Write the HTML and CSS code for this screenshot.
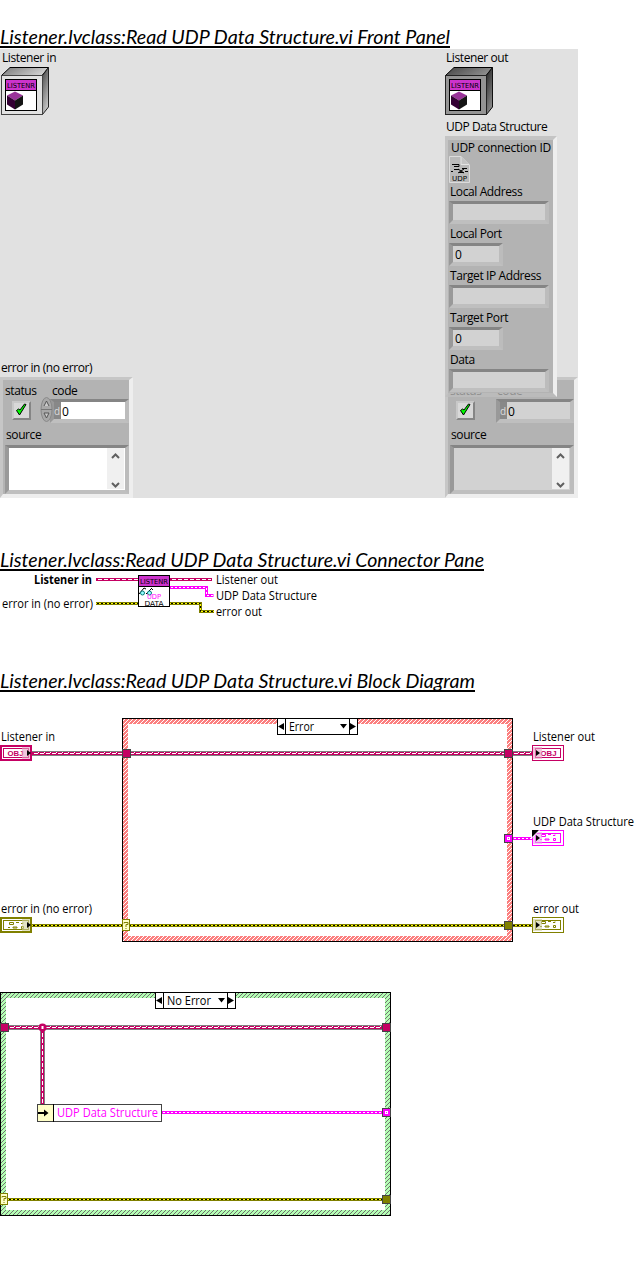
FILE: index.html
```html
<!DOCTYPE html>
<html lang="en">
<head>
<meta charset="utf-8">
<title>Listener.lvclass:Read UDP Data Structure.vi</title>
<link rel="stylesheet" href="styles.css">
</head>
<body>
<svg class="defs" width="0" height="0" aria-hidden="true">
  <defs>
    <pattern id="hatch-red" width="4" height="4" patternUnits="userSpaceOnUse">
      <rect width="4" height="4" fill="#fb7f7f"/>
      <path d="M3 0h1v1h-1zM2 1h1v1h-1zM1 2h1v1h-1zM0 3h1v1h-1z" fill="#fff"/>
    </pattern>
    <pattern id="hatch-green" width="4" height="4" patternUnits="userSpaceOnUse">
      <rect width="4" height="4" fill="#b4ffb4"/>
      <path d="M3 0h1v1h-1zM2 1h1v1h-1zM1 2h1v1h-1zM0 3h1v1h-1z" fill="#707070"/>
    </pattern>
    <linearGradient id="lit-top" x1="0" x2="1" y1="0" y2="0.3"><stop offset="0" stop-color="#777"/><stop offset="1" stop-color="#d0d0d0"/></linearGradient>
    <linearGradient id="lit-side" x1="0" x2="0.4" y1="0" y2="1"><stop offset="0" stop-color="#444"/><stop offset="1" stop-color="#c4c4c4"/></linearGradient>
    <linearGradient id="dim-top" x1="0" x2="1" y1="0" y2="0.3"><stop offset="0" stop-color="#444"/><stop offset="1" stop-color="#8c8c8c"/></linearGradient>
    <linearGradient id="dim-side" x1="0" x2="0.4" y1="0" y2="1"><stop offset="0" stop-color="#222"/><stop offset="1" stop-color="#888"/></linearGradient>
    <g id="badge">
      <rect x=".5" y=".5" width="31" height="31" fill="#fff" stroke="#000"/>
      <rect x="1" y="1" width="30" height="10" fill="#cc33cc"/>
      <path d="M0 11.500h32" stroke="#000"/>
      <text class="pixel" x="2" y="8.500" textLength="28" lengthAdjust="spacingAndGlyphs">LISTENR</text>
    </g>
    <g id="cube">
      <path d="M10 12.500l8 4-8 5-8-5z" fill="#993399"/>
      <path d="M2 16.500l8 5v9l-8-5z" fill="#330033"/>
      <path d="M18 16.500l-8 5v9l8-5z" fill="#141414"/>
    </g>
    <g id="cluster-glyph" fill="none" stroke="currentColor">
      <path d="M8.500 4.500h4v2h-4zM15 4.500h3M20 5.500h2v-1M7 9.500h2M12 9h4v1h-4zM20.500 8.500h2v2h-2z"/>
    </g>
  </defs>
</svg>

<h2 class="title title-first"><svg width="460" height="49"><text x="0" y="44" textLength="450" lengthAdjust="spacingAndGlyphs">Listener.lvclass:Read UDP Data Structure.vi Front Panel</text><rect y="46" width="450" height="2"/></svg></h2>

<section class="panel">
  <div class="column column-in">
    <span class="label">Listener in</span>
    <svg class="object" width="48" height="48">
      <path d="M.5 8.500L9 .5h38.500L41 8.500z" fill="url(#lit-top)" stroke="#000"/>
      <path d="M41.500 8.500l6-8v39.500l-6 7.500z" fill="url(#lit-side)" stroke="#222"/>
      <rect x=".5" y="8.500" width="41" height="39" fill="#e2e2e2" stroke="#444"/>
      <use href="#badge" x="4" y="12"/><use href="#cube" x="4" y="12"/>
    </svg>
    <span class="label label-error">error in (no error)</span>
    <div class="cluster">
      <div class="row">
        <div class="status"><span class="label">status</span>
          <div class="check"><svg width="13" height="15"><path d="M1.500 8.500l3 4.500L11 2.500l-1.500-.5L5 8 3.500 7z" fill="#0f0" stroke="#000"/></svg></div></div>
        <div class="code"><span class="label">code</span>
          <div class="number"><svg class="spinner" width="13" height="25"><ellipse cx="6.500" cy="12.500" rx="5.500" ry="12" fill="#a8a8a8" stroke="#888"/><path d="M1 12.500h11" stroke="#777"/><path d="M4 9l2.500-5L9 9M4 16h5l-2.500 5z" fill="#ccc" stroke="#555"/></svg><div class="field field-code"><b>d</b><span>0</span></div></div></div>
      </div>
      <span class="label label-source">source</span>
      <div class="field field-source"><div class="scroll"><svg width="9" height="6"><path d="M1 5l3.500-3.500L8 5"/></svg><svg width="9" height="6"><path d="M1 1l3.500 3.500L8 1"/></svg></div></div>
    </div>
  </div>

  <div class="column column-out">
    <span class="label">Listener out</span>
    <svg class="object" width="48" height="48">
      <path d="M.5 8.500L9 .5h38.500L41 8.500z" fill="url(#dim-top)" stroke="#000"/>
      <path d="M41.500 8.500l6-8v39.500l-6 7.500z" fill="url(#dim-side)" stroke="#111"/>
      <rect x=".5" y="8.500" width="41" height="39" fill="#949494" stroke="#222"/>
      <use href="#badge" x="4" y="12"/><use href="#cube" x="4" y="12"/>
    </svg>
    <span class="label label-error">e</span>
    <div class="cluster readonly">
      <div class="row">
        <div class="status"><span class="label">status</span>
          <div class="check"><svg width="13" height="15"><path d="M1.500 8.500l3 4.500L11 2.500l-1.500-.5L5 8 3.500 7z" fill="#0f0" stroke="#000"/></svg></div></div>
        <div class="code"><span class="label">code</span>
          <div class="number"><div class="field field-code"><b>d</b><span>0</span></div></div></div>
      </div>
      <span class="label label-source">source</span>
      <div class="field field-source"><div class="scroll"><svg width="9" height="6"><path d="M1 5l3.500-3.500L8 5"/></svg><svg width="9" height="6"><path d="M1 1l3.500 3.500L8 1"/></svg></div></div>
    </div>
    <div class="overlay">
      <span class="label">UDP Data Structure</span>
      <div class="udp">
        <span class="label label-id">UDP connection ID</span>
        <svg class="refnum" width="21" height="27"><path d="M.5.5H12l8.500 8.500v17.500H.5z" fill="#bababa" stroke="#dcdcdc"/><path d="M12 .5v8h8" fill="#c4c4c4" stroke="#e4e4e4"/><path d="M3 8.500h7v2H5M5 13.500h5M13 12.500h5M10 16.500h5M2 15.500h2M16 15.500h3M9 13l6 4M15 13l-6 4" fill="none" stroke="#000"/><text class="pixel" x="3" y="25" textLength="15" lengthAdjust="spacingAndGlyphs">UDP</text></svg>
        <span class="label">Local Address</span><div class="field field-wide"></div>
        <span class="label">Local Port</span><div class="field field-port">0</div>
        <span class="label">Target IP Address</span><div class="field field-wide"></div>
        <span class="label">Target Port</span><div class="field field-port">0</div>
        <span class="label">Data</span><div class="field field-wide"></div>
      </div>
    </div>
  </div>
</section>

<h2 class="title title-next"><svg width="500" height="74"><text x="0" y="69" textLength="484" lengthAdjust="spacingAndGlyphs">Listener.lvclass:Read UDP Data Structure.vi Connector Pane</text><rect y="71" width="484" height="2"/></svg></h2>

<!-- Connector pane -->
<svg class="canvas" width="636" height="50" viewBox="0 572 636 50">
  <g fill="none">
    <path class="w-obj" d="M96 579.500h42M170 579.500h42"/><path class="dash" d="M98 579.500h40M172 579.500h39"/>
    <path class="w-udp" d="M170 587.500h36.500v8h7"/><path class="dash-s" d="M171 587.500h35.500v8h7"/>
    <path class="w-err" d="M96 603.500h42M170 603.500h30.500v8h13.500"/><path class="w-yel" d="M96 603.500h42M170 603.500h30.500v8h13.500"/><path class="dash-k" d="M97 603.500h41M171 603.500h29.500v8h13.500"/>
  </g>
  <use href="#badge" x="138" y="575"/>
  <path d="M139 594l5-6M146 594l6-6" stroke="#000" fill="none"/><path d="M144 588l2 1M151 588l2 2" stroke="#000"/>
  <circle cx="142.500" cy="593" r="2" fill="#9ff" stroke="#087b7b"/><circle cx="149.500" cy="593" r="2" fill="#9ff" stroke="#087b7b"/>
  <text class="pixel mag" x="147" y="599" textLength="14" lengthAdjust="spacingAndGlyphs">UDP</text>
  <text class="pixel" x="144.500" y="605.500" textLength="19" lengthAdjust="spacingAndGlyphs">DATA</text>
  <text class="bold" x="34" y="584" textLength="58" lengthAdjust="spacingAndGlyphs">Listener in</text>
  <text x="2" y="608" textLength="91" lengthAdjust="spacingAndGlyphs">error in (no error)</text>
  <text x="216" y="584" textLength="62" lengthAdjust="spacingAndGlyphs">Listener out</text>
  <text x="216" y="600" textLength="101" lengthAdjust="spacingAndGlyphs">UDP Data Structure</text>
  <text x="216" y="616" textLength="46" lengthAdjust="spacingAndGlyphs">error out</text>
</svg>

<h2 class="title title-last"><svg width="500" height="70"><text x="0" y="66" textLength="475" lengthAdjust="spacingAndGlyphs">Listener.lvclass:Read UDP Data Structure.vi Block Diagram</text><rect y="68" width="475" height="2"/></svg></h2>

<!-- Block diagram, Error case -->
<svg class="canvas" width="636" height="276" viewBox="0 694 636 276">
  <path fill="url(#hatch-red)" fill-rule="evenodd" d="M123 719h389v222H123zM128 724v212h379V724z"/>
  <rect x="122.500" y="718.500" width="390" height="223" fill="none" stroke="#000"/>
  <g fill="none">
    <path class="w-rim" d="M32 753.500h500"/><path class="w-obj" d="M32 753.500h500"/><path class="dash" d="M34 753.500h498"/><path class="dots" d="M38 752.500h494"/>
    <path class="w-udp" d="M513 838.500h19"/><path class="dash-s" d="M514 838.500h18"/>
    <path class="w-err" d="M32 925.500h500"/><path class="w-yel" d="M32 925.500h500"/><path class="dash-k" d="M33 925.500h499"/>
  </g>
  <g stroke="#444">
    <rect x="122.500" y="749.500" width="8" height="8" fill="#c50063"/><rect x="504.500" y="749.500" width="8" height="8" fill="#c50063"/>
    <rect x="504.500" y="834.500" width="8" height="8" fill="#f0f"/><rect x="504.500" y="921.500" width="8" height="8" fill="#808000"/>
  </g>
  <rect x="507.500" y="837.500" width="2" height="2" fill="#f0f" stroke="#fff"/>
  <rect x="122.500" y="919.500" width="7" height="11" fill="#ffffc8" stroke="#808000"/>
  <path d="M124 923.500v-1h4v2h-2v2.500M125.500 928.500h1" fill="none" stroke="#808000"/>

  <rect x="277.500" y="718.500" width="80" height="16" fill="#fff" stroke="#000"/>
  <path d="M285.500 718v17M349.500 718v17" stroke="#000"/>
  <path d="M284 723v7l-6-3.500zM350 723v7l6-3.500zM340 724h7l-3.500 4.500z"/>
  <text x="289" y="731" textLength="25" lengthAdjust="spacingAndGlyphs">Error</text>

  <!-- Controls -->
  <rect x="1" y="746" width="30" height="14" fill="#fff" stroke="#c50063" stroke-width="2"/>
  <rect x="3.500" y="748.500" width="25" height="9" fill="#fff" stroke="#c50063"/>
  <text class="tag obj" x="7.500" y="756" textLength="16" lengthAdjust="spacingAndGlyphs">OBJ</text>
  <rect x="22" y="747" width="8" height="12" fill="#e8a0c4" opacity=".6"/><path d="M27 750l4 3-4 3z"/>
  <g color="#808000">
    <rect x="1" y="918" width="30" height="14" fill="#fff" stroke="#808000" stroke-width="2"/>
    <rect x="3.500" y="920.500" width="25" height="9" fill="#fff" stroke="#808000"/>
    <use href="#cluster-glyph" x="1" y="918"/>
    <rect x="22" y="919" width="8" height="12" fill="#cfcf9c" opacity=".6"/><path d="M27 922l4 3-4 3z"/>
  </g>
  <!-- Indicators -->
  <rect x="532.500" y="745.500" width="31" height="15" fill="#fff" stroke="#c50063"/>
  <rect x="535.500" y="748.500" width="25" height="9" fill="#fff" stroke="#c50063"/>
  <text class="tag obj" x="540.500" y="756" textLength="16" lengthAdjust="spacingAndGlyphs">OBJ</text>
  <rect x="533" y="747" width="9" height="12" fill="#e8a0c4" opacity=".6"/><path d="M536 750l4 3-4 3z"/>
  <g color="#f0f">
    <rect x="532.500" y="830.500" width="31" height="15" fill="#fff" stroke="#f0f"/><rect x="535.500" y="833.500" width="25" height="9" fill="#fff" stroke="#f0f"/>
    <use href="#cluster-glyph" x="533" y="830"/>
    <rect x="533" y="832" width="9" height="12" fill="#e9a9e9" opacity=".6"/><path d="M531 839v-9h9z" fill="#fff"/><path d="M532 837v-7h7zM536 835l4 3-4 3z"/>
  </g>
  <g color="#808000">
    <rect x="532.500" y="917.500" width="31" height="15" fill="#fff" stroke="#808000"/><rect x="535.500" y="920.500" width="25" height="9" fill="#fff" stroke="#808000"/>
    <use href="#cluster-glyph" x="533" y="917"/>
    <rect x="533" y="919" width="9" height="12" fill="#cfcf9c" opacity=".6"/><path d="M536 922l4 3-4 3z"/>
  </g>
  <text x="1" y="741" textLength="54" lengthAdjust="spacingAndGlyphs">Listener in</text>
  <text x="1" y="913" textLength="91" lengthAdjust="spacingAndGlyphs">error in (no error)</text>
  <text x="533" y="741" textLength="62" lengthAdjust="spacingAndGlyphs">Listener out</text>
  <text x="533" y="826" textLength="101" lengthAdjust="spacingAndGlyphs">UDP Data Structure</text>
  <text x="533" y="913" textLength="46" lengthAdjust="spacingAndGlyphs">error out</text>
</svg>

<!-- Block diagram, No Error case -->
<svg class="canvas" width="636" height="250" viewBox="0 970 636 250">
  <path fill="url(#hatch-green)" fill-rule="evenodd" d="M1 993h389v222H1zM6 998v212h379V998z"/>
  <rect x=".5" y="992.500" width="390" height="223" fill="none" stroke="#000"/>
  <g fill="none">
    <path class="w-rim" d="M9 1027.500h374M42.500 1027v77"/><path class="w-obj" d="M9 1027.500h374M42.500 1027v77"/><path class="dash" d="M10 1027.500h373M42.500 1033v71"/><path class="dots" d="M14 1026.500h368"/>
    <path class="w-udp" d="M162 1112.500h221"/><path class="dash-s" d="M163 1112.500h220"/>
    <path class="w-err" d="M8 1199.500h375"/><path class="w-yel" d="M8 1199.500h375"/><path class="dash-k" d="M9 1199.500h374"/>
  </g>
  <circle cx="42.500" cy="1027.500" r="4" fill="#c50063"/><path d="M42.500 1026v3" stroke="#fff" stroke-width="2"/>
  <g stroke="#444">
    <rect x=".5" y="1023.500" width="8" height="8" fill="#c50063"/><rect x="382.500" y="1023.500" width="8" height="8" fill="#c50063"/>
    <rect x="382.500" y="1108.500" width="8" height="8" fill="#f0f"/><rect x="382.500" y="1195.500" width="8" height="8" fill="#808000"/>
  </g>
  <rect x="385.500" y="1111.500" width="2" height="2" fill="#f0f" stroke="#fff"/>
  <rect x=".5" y="1193.500" width="7" height="11" fill="#ffffc8" stroke="#808000"/>
  <path d="M2 1197.500v-1h4v2h-2v2.500M3.500 1202.500h1" fill="none" stroke="#808000"/>
  <rect x="37.500" y="1104.500" width="124" height="17" fill="#fff" stroke="#444"/>
  <rect x="38" y="1105" width="15" height="16" fill="#ffffc8"/><path d="M53.500 1104v18" stroke="#000"/>
  <path d="M38 1112h6v-2.500l4.500 3.500-4.500 3.500v-2.500h-6z"/>
  <text class="mag" x="57" y="1117" textLength="101" lengthAdjust="spacingAndGlyphs">UDP Data Structure</text>
  <rect x="155.500" y="992.500" width="80" height="16" fill="#fff" stroke="#000"/>
  <path d="M163.500 992v17M227.500 992v17" stroke="#000"/>
  <path d="M162 997v7l-6-3.500zM228 997v7l6-3.500zM218 998h7l-3.500 4.500z"/>
  <text x="167" y="1005" textLength="44" lengthAdjust="spacingAndGlyphs">No Error</text>
</svg>
</body>
</html>
```
FILE: styles.css
```css
* { box-sizing: border-box; }
html, body { margin: 0; padding: 0; background: #fff; }
body { width: 636px; height: 1266px; overflow: hidden; font-family: "Open Sans", "Noto Sans", sans-serif; font-size: 12px; color: #000; }
svg { display: block; }
.defs { position: absolute; }

.title { margin: 0; font-weight: normal; overflow: hidden; }
.title text { font: italic 19.5px Lato, sans-serif; }
.title-first { height: 49px; }
.title-next { height: 74px; }
.title-last { height: 72px; }

.panel { display: flex; justify-content: space-between; width: 578px; height: 449px; background: #e1e1e1; }
.column { position: relative; display: flex; flex-direction: column; width: 133px; height: 449px; padding-top: 1px; }
.label { display: block; height: 16px; line-height: 16px; white-space: nowrap; letter-spacing: -0.4px; }
.column > .label { padding-left: 1px; }
.column-in > .label:first-child { padding-left: 2px; }
.object { margin: 1px 0 0 1px; }
.column-out .object { margin-left: 0; }
.label-error { margin-top: 245px; }
.cluster { margin-top: 1px; width: 133px; height: 121px; padding: 3px 0 0 1px; background: #b3b3b3; border: solid; border-width: 3px 4px 4px 3px; border-color: #c6c6c6 #eee #eee #c6c6c6; }
.row { display: flex; }
.status { width: 42px; padding: 0 0 0 1px; }
.check { width: 19px; height: 19px; margin: 2px 0 0 7px; border: 2px solid; border-color: #c8c8c8 #858585 #858585 #c8c8c8; background: #d8d8d8; }
.check svg { margin-left: 1px; margin-top: -1px; }
.code { width: 83px; }
.code .label { margin-left: 6px; margin-top: -1px; line-height: 17px; }
.number { display: flex; margin-left: -6px; height: 27px; }
.spinner { flex: none; margin-top: -1px; z-index: 1; }
.field { background: #fff; border: solid; border-width: 3px 4px 4px; border-color: #858585 #bcbcbc #bfbfbf #999; }
.field-code { display: flex; flex: none; width: 79px; height: 24px; margin: 1px 0 0 -3px; line-height: 19px; }
.field-code b { width: 7px; background: #888; color: #ddd; font-weight: normal; font-size: 10px; overflow: hidden; }
.field-code span { padding-left: 1px; }
.label-source { margin: 2px 0 0 2px; }
.field-source { display: flex; flex: none; justify-content: flex-end; width: 124px; height: 49px; margin-top: 2px; margin-left: 1px; padding: 0 1px 1px 0; }
.scroll { display: flex; flex-direction: column; justify-content: space-between; width: 17px; padding: 5px 4px 1px; background: #f0f0f0; }
.scroll path { fill: none; stroke: #606060; stroke-width: 2; }
.readonly .field, .udp .field { background: #d2d2d2; }
.readonly .check { margin-left: 6px; }
.readonly .number { margin-left: 5px; }
.readonly .field-code { width: 78px; margin-left: 0; }

/* Cluster overlapping the error output */
.overlay { position: absolute; left: 0; top: 70px; }
.overlay > .label { padding-left: 1px; letter-spacing: -0.45px; }
.udp { width: 112px; height: 261px; margin-top: 1px; padding-left: 1px; background: #b3b3b3; background-clip: padding-box; border: solid; border-width: 4px 4px 4px 3px; border-color: #c4c4c4 #eee rgba(190,190,190,.75) #c4c4c4; }
.udp .label { height: 17px; line-height: 16px; padding-left: 1px; }
.udp .label-id { height: 16px; padding-left: 2px; letter-spacing: -0.3px; }
.refnum { margin-bottom: 1px; }
.udp .field { height: 23px; margin-bottom: 2px; }
.field-wide { width: 100px; }
.field-port { width: 54px; padding-left: 2px; line-height: 17px; }

.canvas text { font-family: "Open Sans", "Noto Sans", sans-serif; font-size: 12px; }
.canvas .bold { font-weight: 700; }
.pixel, .canvas .pixel { font: 7px "DejaVu Sans", sans-serif; }
.canvas .tag { font: bold 8px "Liberation Sans", Arial, sans-serif; }
.obj { fill: #c50063; }
.mag { fill: #f0f; }
.w-rim { stroke: #808080; stroke-width: 5; }
.w-obj { stroke: #c50063; stroke-width: 3; }
.w-udp { stroke: #f0f; stroke-width: 3; }
.w-err { stroke: #808000; stroke-width: 3; }
.w-yel { stroke: #ff0; stroke-width: 1; }
.dash { stroke: #fff; stroke-width: 1; stroke-dasharray: 4 2; }
.dots { stroke: #fff; stroke-width: 1; stroke-dasharray: 1 5; }
.dash-s { stroke: #fff; stroke-width: 1; stroke-dasharray: 2 2; }
.dash-k { stroke: #000; stroke-width: 1; stroke-dasharray: 2 2; }
```
